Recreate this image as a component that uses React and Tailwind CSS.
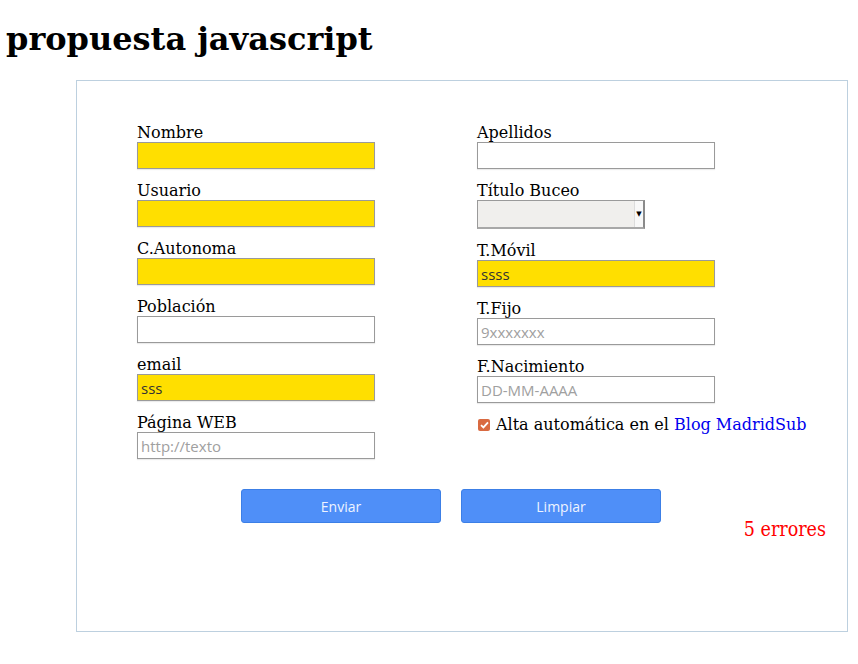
import React from 'react';

const serif = "font-['DejaVu_Serif',serif]";
const sans = "font-['Open_Sans','DejaVu_Sans',sans-serif]";

function Field({ label, value, placeholder, filled }) {
  return (
    <div className="flex flex-col">
      <label className="block text-[16px] leading-[19px] text-black">{label}</label>
      <input
        readOnly
        value={value || ''}
        placeholder={placeholder}
        className={`${sans} h-[27px] w-[238px] border border-[#9a9a9a] px-[3px] text-[15px] text-[#333] placeholder:text-[#a0a0a0] outline-none shadow-[0_1px_1px_rgba(0,0,0,0.08)] ${
          filled ? 'bg-[#ffdf00]' : 'bg-white'
        }`}
      />
    </div>
  );
}

function FakeSelect({ label }) {
  return (
    <div className="flex flex-col">
      <label className="block text-[16px] leading-[19px] text-black">{label}</label>
      <div className="flex h-[29px] w-[168px] justify-end border border-[#9a9a9a] border-r-2 border-b-2 border-r-[#8a8a8a] border-b-[#a8a8a8] bg-[#f0efed]">
        <span className="flex w-[9px] items-center justify-center bg-[#f8f8f8] border-l border-[#dcdcdc] text-[7px] leading-none text-black">
          ▼
        </span>
      </div>
    </div>
  );
}

export default function App() {
  const left = [
    { label: 'Nombre', filled: true },
    { label: 'Usuario', filled: true },
    { label: 'C.Autonoma', filled: true },
    { label: 'Población' },
    { label: 'email', filled: true, value: 'sss' },
    { label: 'Página WEB', placeholder: 'http://texto' },
  ];

  return (
    <div className={`${serif} min-h-screen bg-white text-black`}>
      <h1 className="ml-[6px] mt-[21px] mb-[22px] text-[32px] leading-[37px] font-bold">
        propuesta javascript
      </h1>

      <div className="ml-[76px] h-[552px] w-[772px] border border-[#bdd0df] pt-[42px]">
        <div className="flex pl-[60px] gap-[102px]">
          <div className="flex flex-col gap-[12px]">
            {left.map((f) => (
              <Field key={f.label} {...f} />
            ))}
          </div>

          <div className="flex flex-col gap-[12px]">
            <Field label="Apellidos" />
            <FakeSelect label="Título Buceo" />
            <Field label="T.Móvil" filled value="ssss" />
            <Field label="T.Fijo" placeholder="9xxxxxxx" />
            <Field label="F.Nacimiento" placeholder="DD-MM-AAAA" />
            <div className="flex items-center text-[16px] leading-[19px] whitespace-nowrap">
              <span className="ml-[1px] mr-[6px] flex h-[12px] w-[12px] items-center justify-center rounded-[2px] bg-[#d96a41]">
                <svg width="9" height="8" viewBox="0 0 9 8">
                  <path d="M1 4.2 L3.4 6.4 L8 1.4" fill="none" stroke="white" strokeWidth="1.8" />
                </svg>
              </span>
              <span>
                Alta automática en el <a className="text-[#0000ee]">Blog MadridSub</a>
              </span>
            </div>
          </div>
        </div>

        <div className="mt-[30px] flex items-start pl-[164px] pr-[21px]">
          <button
            className={`${sans} h-[34px] w-[200px] rounded-[3px] border border-[#3c7fe6] bg-[#4f8ff8] text-[14px] text-[#eef4ff]`}
          >
            Enviar
          </button>
          <button
            className={`${sans} ml-[20px] h-[34px] w-[200px] rounded-[3px] border border-[#3c7fe6] bg-[#4f8ff8] text-[14px] text-[#eef4ff]`}
          >
            Limpiar
          </button>
          <span className="ml-auto mt-[30px] font-['DejaVu_Serif_Condensed','DejaVu_Serif',serif] font-stretch-condensed text-[19.5px] leading-[22px] text-[#ff0000]">
            5 errores
          </span>
        </div>
      </div>
    </div>
  );
}
